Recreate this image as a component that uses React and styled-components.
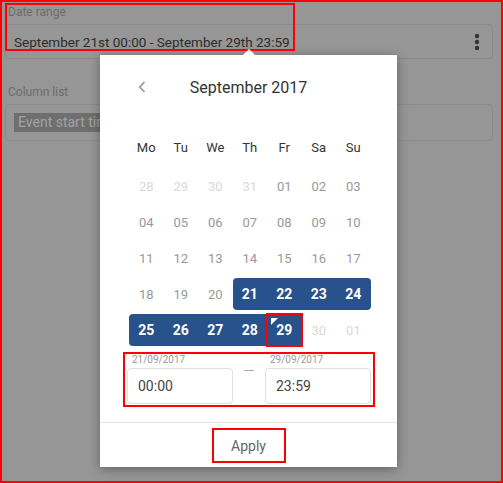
import React from "react";
import styled, { createGlobalStyle } from "styled-components";

const GlobalStyle = createGlobalStyle`
  html, body {
    margin: 0;
    padding: 0;
    background: #969696;
    font-family: Roboto, "Liberation Sans", sans-serif;
  }
  * { box-sizing: border-box; }
`;

const Frame = styled.div`
  position: relative;
  width: 503px;
  height: 483px;
  border: 2px solid #ff0000;
  background: #969696;
  padding: 3px 8px 0 3px;
  overflow: hidden;
`;

const Field = styled.div`
  display: flex;
  flex-direction: column;
  gap: 5px;
  margin-top: ${(p) => p.$top || 0}px;
`;

const Label = styled.div`
  font-size: 12px;
  line-height: 14px;
  color: #6c6c6c;
  padding-left: 3px;
`;

const InputBox = styled.div`
  display: flex;
  align-items: center;
  justify-content: space-between;
  height: ${(p) => p.$h}px;
  border: 1px solid #8b8b8b;
  border-radius: 4px;
  padding: 0 12px 0 8px;
  font-size: 13.5px;
  color: #2c2c2c;
`;

const ChipRow = styled.div`
  display: flex;
  gap: 7px;
`;

const Chip = styled.div`
  height: 19px;
  width: ${(p) => p.$w}px;
  padding: 0 4px;
  font-size: 14px;
  line-height: 19px;
  white-space: nowrap;
  overflow: hidden;
  background: ${(p) => (p.$dark ? "#6f6f6f" : "#9a9a9a")};
  color: #a2a2a2;
`;

const Annotation = styled.div`
  position: absolute;
  top: ${(p) => p.$top}px;
  left: ${(p) => p.$left}px;
  width: ${(p) => p.$width}px;
  height: ${(p) => p.$height}px;
  border: 2px solid #ff0000;
  pointer-events: none;
`;

const Popup = styled.div`
  position: absolute;
  top: 53px;
  left: 98px;
  width: 297px;
  background: #fff;
  box-shadow: 0 2px 10px rgba(0, 0, 0, 0.35);
  display: flex;
  flex-direction: column;

  &::before {
    content: "";
    position: absolute;
    top: -6px;
    left: 143px;
    border-left: 6px solid transparent;
    border-right: 6px solid transparent;
    border-bottom: 6px solid #fff;
  }
`;

const Header = styled.div`
  position: relative;
  height: 24px;
  margin-top: 20px;
  display: flex;
  align-items: center;
  justify-content: center;
  font-size: 16px;
  color: #333;
`;

const PrevButton = styled.div`
  position: absolute;
  left: 38px;
  top: 6px;
  display: flex;
`;

const Grid = styled.div`
  display: grid;
  grid-template-columns: repeat(7, 34.5px);
  margin-left: 29px;
`;

const WeekRow = styled(Grid)`
  margin-top: 38px;
  height: 20px;
  align-items: center;
`;

const WeekDay = styled.div`
  text-align: center;
  font-size: 13px;
  color: #333;
`;

const DayGrid = styled(Grid)`
  margin-top: 13px;
  row-gap: 4px;
`;

const Day = styled.div`
  position: relative;
  height: 32px;
  display: flex;
  align-items: center;
  justify-content: center;
  font-size: ${(p) => (p.$sel ? 14 : 13)}px;
  font-weight: ${(p) => (p.$sel ? 700 : 400)};
  color: ${(p) => (p.$sel ? "#fff" : p.$muted ? "#d9d9d9" : "#999")};
  background: ${(p) => (p.$sel ? "#27528b" : "transparent")};
  border-top-left-radius: ${(p) => (p.$start ? 4 : 0)}px;
  border-bottom-left-radius: ${(p) => (p.$start ? 4 : 0)}px;
  border-top-right-radius: ${(p) => (p.$end ? 4 : 0)}px;
  border-bottom-right-radius: ${(p) => (p.$end ? 4 : 0)}px;
  outline: ${(p) => (p.$marked ? "2px solid #ff0000" : "none")};
  outline-offset: -1px;

  &::before {
    content: "";
    display: ${(p) => (p.$corner ? "block" : "none")};
    position: absolute;
    top: 4px;
    left: 4px;
    border-top: 7px solid #fff;
    border-right: 7px solid transparent;
  }
`;

const TimeRow = styled.div`
  margin: 6px 0 0 23px;
  width: 252px;
  height: 55px;
  border: 2px solid #ff0000;
  padding: 0 2px;
  display: flex;
  align-items: flex-end;
  justify-content: space-between;
`;

const TimeField = styled.div`
  display: flex;
  flex-direction: column;
  gap: 2px;
  padding-bottom: 1px;
`;

const TimeLabel = styled.div`
  font-size: 10px;
  line-height: 12px;
  color: #999;
  padding-left: 5px;
`;

const TimeInput = styled.div`
  width: 106px;
  height: 36px;
  border: 1px solid #e0e0e0;
  border-radius: 4px;
  padding-left: 10px;
  display: flex;
  align-items: center;
  font-size: 14px;
  color: #444;
`;

const Dash = styled.div`
  align-self: flex-start;
  margin-top: 16px;
  width: 10px;
  height: 1px;
  background: #aaa;
`;

const Footer = styled.div`
  margin-top: 15px;
  border-top: 1px solid #e2e2e2;
  padding: 5px 0 4px;
  display: flex;
  justify-content: center;
`;

const ApplyButton = styled.button`
  width: 74px;
  height: 35px;
  border: 2px solid #ff0000;
  background: #fff;
  font-family: inherit;
  font-size: 14px;
  color: #666;
  padding: 0;
`;

const weekDays = ["Mo", "Tu", "We", "Th", "Fr", "Sa", "Su"];

const days = [
  ["28", "29", "30", "31", "01", "02", "03"],
  ["04", "05", "06", "07", "08", "09", "10"],
  ["11", "12", "13", "14", "15", "16", "17"],
  ["18", "19", "20", "21", "22", "23", "24"],
  ["25", "26", "27", "28", "29", "30", "01"],
];

const Kebab = () => (
  <svg width="6" height="18" viewBox="0 0 6 18">
    <circle cx="3" cy="3" r="2.2" fill="#333" />
    <circle cx="3" cy="9" r="2.2" fill="#333" />
    <circle cx="3" cy="15" r="2.2" fill="#333" />
  </svg>
);

const Chevron = () => (
  <svg width="8" height="12" viewBox="0 0 8 12">
    <path d="M6.5 1 L1.8 6 L6.5 11" fill="none" stroke="#999" strokeWidth="1.8" />
  </svg>
);

// last selected day (29th) is drawn square with a corner flag
const dayProps = (r, c) => {
  const muted = (r === 0 && c < 4) || (r === 4 && c > 4);
  const sel = (r === 3 && c >= 3) || (r === 4 && c <= 4);
  const last = r === 4 && c === 4;
  return {
    $muted: muted,
    $sel: sel,
    $start: sel && (c === 0 || (r === 3 && c === 3)),
    $end: sel && c === 6,
    $corner: last,
    $marked: last,
  };
};

export default function App() {
  return (
    <>
      <GlobalStyle />
      <Frame>
        <Field>
          <Label>Date range</Label>
          <InputBox $h={35}>
            <span>September 21st 00:00 - September 29th 23:59</span>
            <Kebab />
          </InputBox>
        </Field>
        <Field $top={26}>
          <Label>Column list</Label>
          <InputBox $h={37}>
            <ChipRow>
              <Chip $dark $w={118}>Event start time</Chip>
              <Chip $w={98}>Event name</Chip>
            </ChipRow>
          </InputBox>
        </Field>

        <Annotation $top={1} $left={3} $width={290} $height={48} />

        <Popup>
          <Header>
            <PrevButton>
              <Chevron />
            </PrevButton>
            September 2017
          </Header>
          <WeekRow>
            {weekDays.map((d) => (
              <WeekDay key={d}>{d}</WeekDay>
            ))}
          </WeekRow>
          <DayGrid>
            {days.map((row, r) =>
              row.map((d, c) => (
                <Day key={`${r}-${c}`} {...dayProps(r, c)}>
                  {d}
                </Day>
              ))
            )}
          </DayGrid>
          <TimeRow>
            <TimeField>
              <TimeLabel>21/09/2017</TimeLabel>
              <TimeInput>00:00</TimeInput>
            </TimeField>
            <Dash />
            <TimeField>
              <TimeLabel>29/09/2017</TimeLabel>
              <TimeInput>23:59</TimeInput>
            </TimeField>
          </TimeRow>
          <Footer>
            <ApplyButton>Apply</ApplyButton>
          </Footer>
        </Popup>
      </Frame>
    </>
  );
}
